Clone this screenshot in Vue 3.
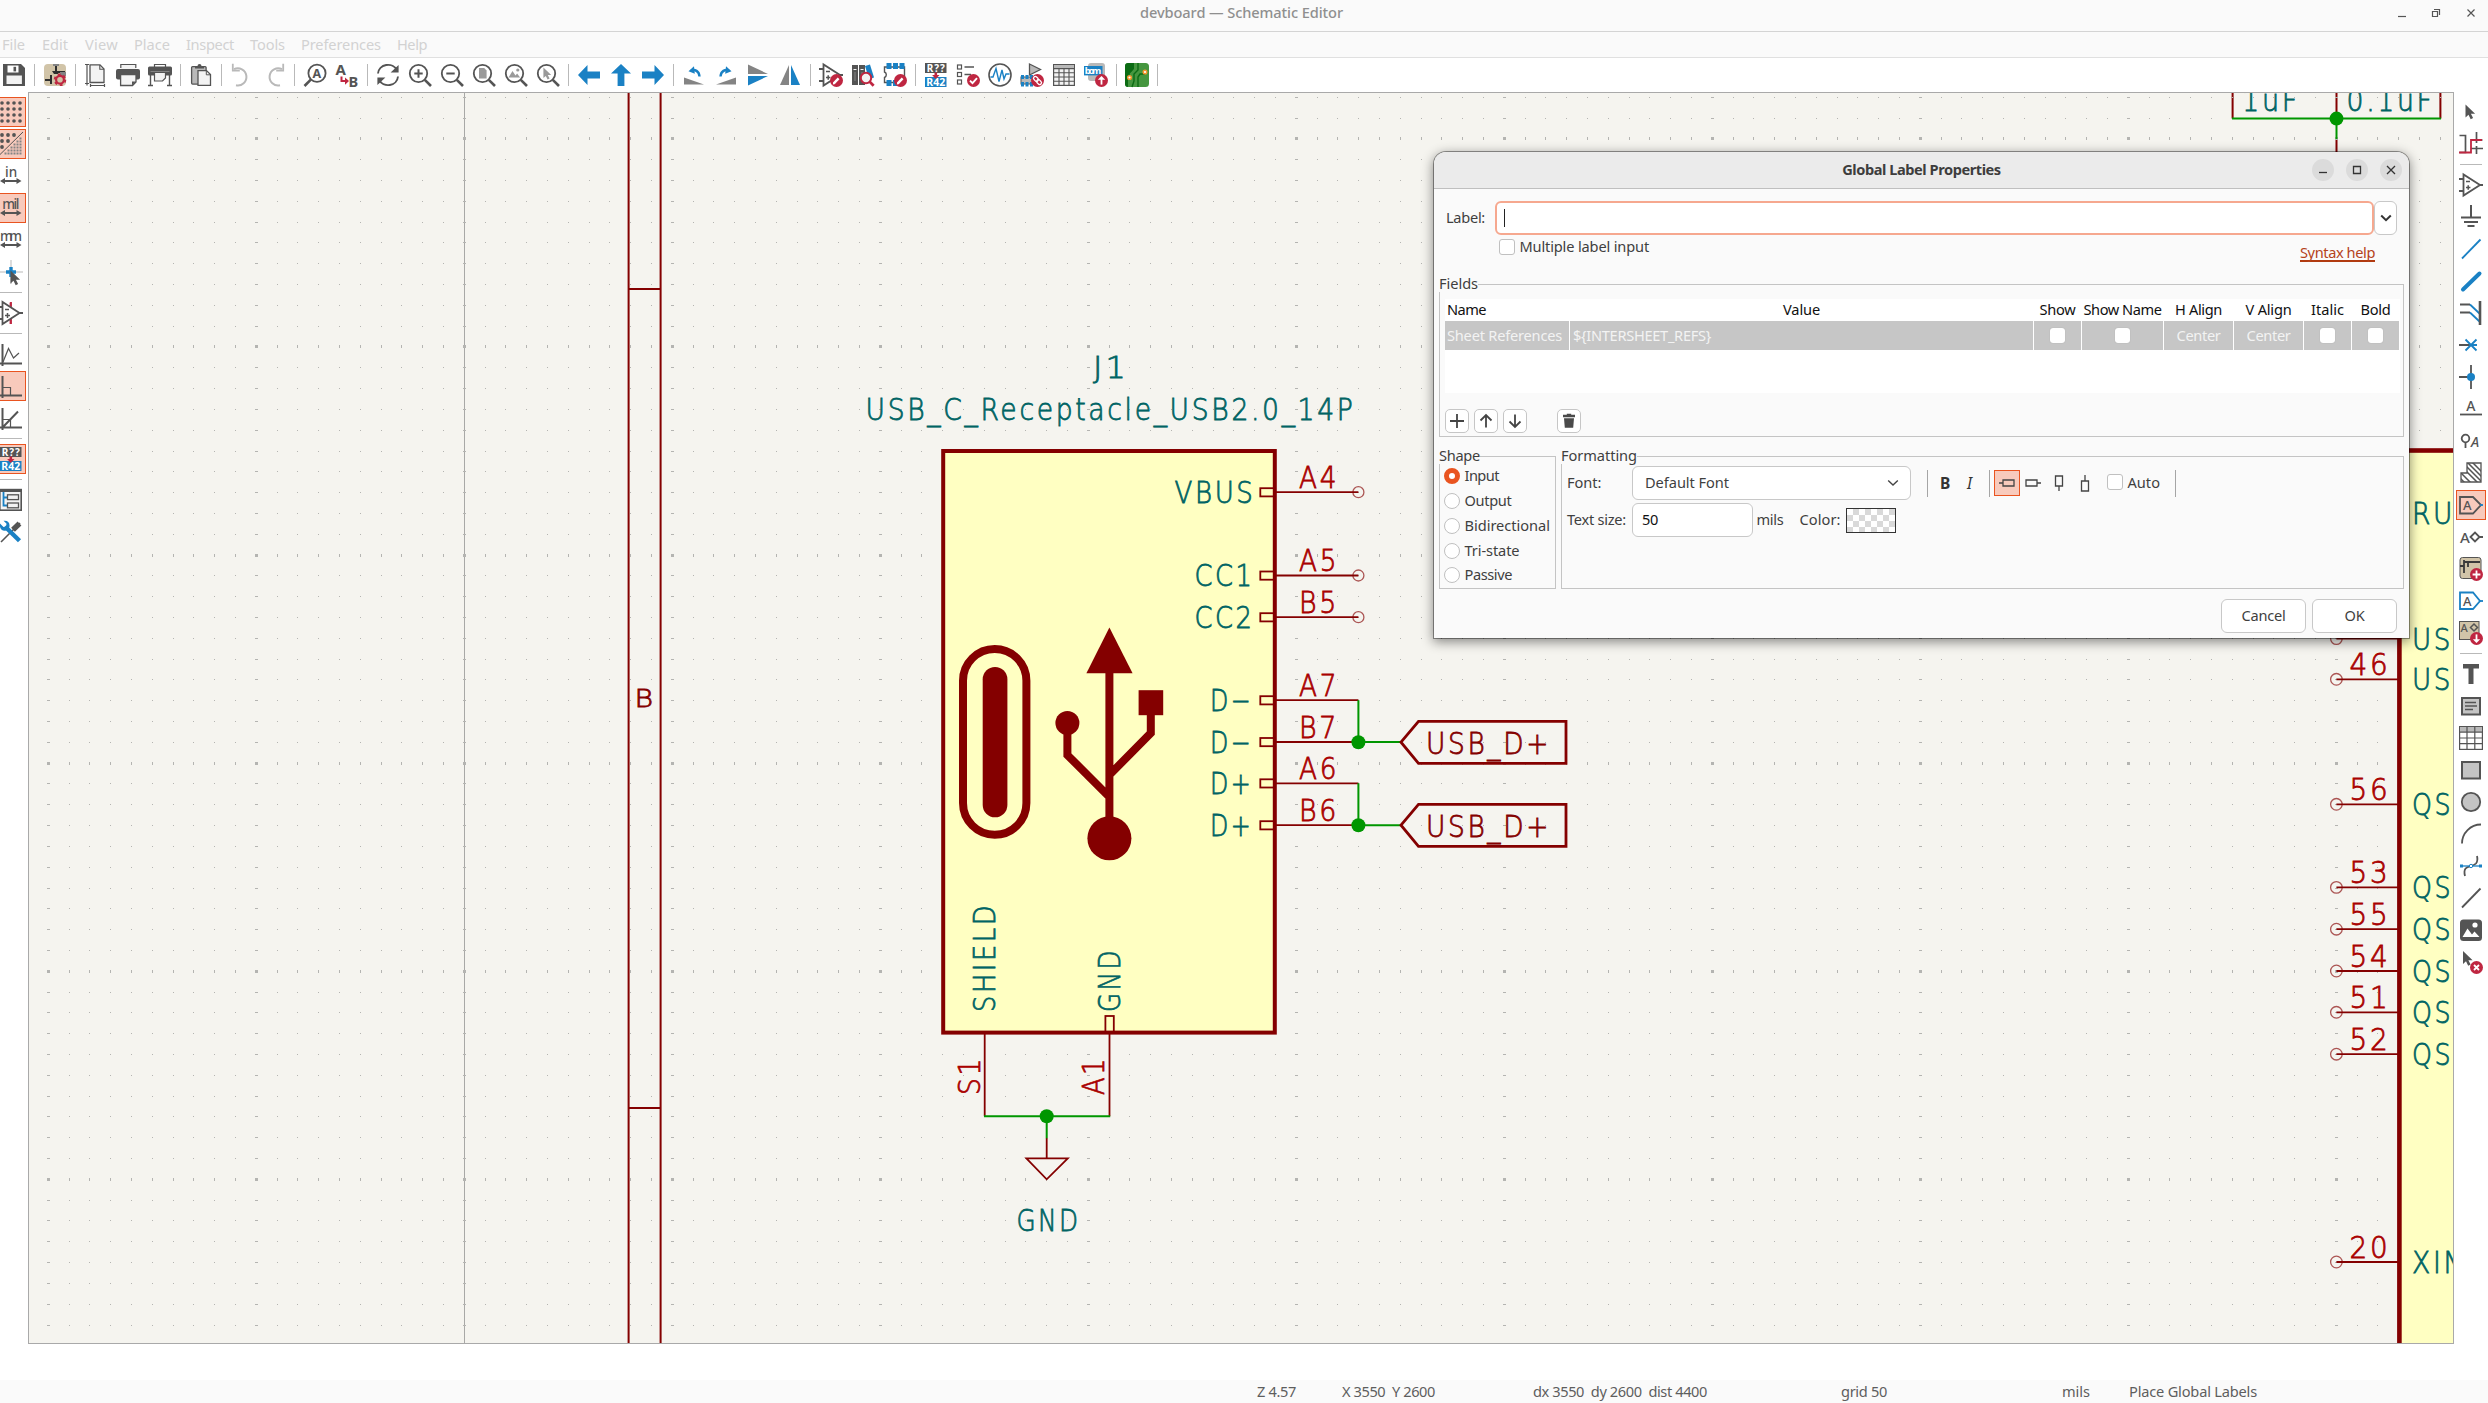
<script setup>
const G = '#545454', B = '#1a81c4', R = '#bf2641', M = '#b9b9b9', L = '#f3f3f3', D = '#848484'

// Spreads or tightens the letters of a label so it fills the given width.
const vFit = {
  mounted(el, { value }) {
    el.classList.add('ui')
    const natural = el.getBoundingClientRect().width
    el.style.letterSpacing = (value - natural) / el.textContent.length + 'px'
  }
}

const line = (d, c = G, w = 2) => `<path d="${d}" fill="none" stroke="${c}" stroke-width="${w}"/>`
const fill = (d, c = G) => `<path d="${d}" fill="${c}"/>`
const txt = (t, x, y, s, c = G, w = 700, extra = '') =>
  `<text x="${x}" y="${y}" font-size="${s}" font-weight="${w}" fill="${c}" ${extra}>${t}</text>`
const lens = inner => `<circle cx="10.5" cy="10.5" r="8.7" fill="none" stroke="${G}" stroke-width="1.8"/>` + line('M16.8 16.8L23 23', G, 2.6) + inner
const badge = inner => `<circle cx="17.5" cy="17.5" r="6.5" fill="${R}"/>` + inner
const pencil = badge(line('M14.8 20.4L19.6 15.4', '#fff', 2.4) + fill('M13.8 21.5l.6-2.4 1.8 1.8z', '#fff'))
const amp = line('M4.5 1.5V22.5L21 12Z', G, 1.8) + line('M0 6H4M0 18H4M21 12H24', G, 1.8) + line('M7 8.5h4M7 14.5h4.4M9.2 12.3v4.4', G, 1.5)
const annot = `<rect x="1" y="0" width="21.5" height="10" fill="${G}"/><rect x="1" y="14" width="21.5" height="10" fill="${B}"/>` +
  txt('R??', 2.8, 8.8, 10, '#fff', 700, 'textLength="18"') + txt('R42', 2.2, 22.8, 10.5, '#fff', 700, 'textLength="19"') + fill('M10.5 9.5h2.6v2.5h2.4L11.8 16 8.1 12h2.4z', R)
const unit = t => txt(t, t === 'in' ? 6 : t === 'mil' ? 3.3 : 1, 12.5, 13.5, G, 500, t === 'mm' ? 'textLength="22"' : t === 'mil' ? 'textLength="17"' : '') +
  line('M4 17H19.5') + fill('M1 17l5-3v6zM22.5 17l-5-3v6z')
const cursor = (x, y, c = G) => fill(`M${x} ${y}v13l3-2.8 2.2 4.6 2.4-1.2-2.2-4.4h4.2z`, c)

const icons = {
  save: fill('M1 1H19L23 5V23H1Z') + fill('M5.5 2.5h11v7h-11z', '#fff') + fill('M11.5 3.8h2.6v4.6h-2.6z') + fill('M4.5 12.5h15.4V21H4.5z', L),
  setup: `<rect x="1" y="1" width="22" height="22" rx="4" fill="#d1c4a8"/>` + line('M13 1v6M13 7v4M2 17h5M8 12v9M13 9h9', '#2e2e2e', 2) + fill('M9 8h8l-2 3h-4z', '#2e2e2e') + fill('M10 1h6v2h-6zM17 9h6v4h-6z', D) +
    `<circle cx="17" cy="16.8" r="3.9" fill="none" stroke="${R}" stroke-width="2.2"/><circle cx="17" cy="16.8" r="5.4" fill="none" stroke="${R}" stroke-width="1.8" stroke-dasharray="2.8 2.85"/>`,
  page: line('M3 1.5V22.5M1 1.5h4M1 20.5h4M6.5 22.5h14M6.5 21v3M20.5 21v3', G, 1.2) + `<path d="M6 1.8H16L20 6V19.5H6Z" fill="${L}" stroke="${G}" stroke-width="1.3"/>` + line('M15.8 2v4.2H20', G, 1.1),
  print: fill('M5 1h15v5H5z', L) + line('M4.8 5V1.5h15V5', G, 1.2) + `<rect x="0" y="6" width="24" height="10.5" rx="2" fill="${G}"/><path d="M4.6 11.5H20V19l-3.5 3.5H4.6z" fill="${L}" stroke="${G}" stroke-width="1.3"/>` + fill('M16 18.5h4l-4 4z'),
  plot: line('M6.5 4V1.5h11V4', G, 1.2) + `<rect x="0" y="3.5" width="24" height="9" rx="1.5" fill="${G}"/>` + line('M2.5 8.5h19', D, 1) + `<path d="M6.5 9.5H17.5V15l-3 3h-8z" fill="${L}" stroke="${G}" stroke-width="1.2"/>` + line('M2.5 12v10M21.5 12v10M0 22.5h5M19 22.5h5', G, 1.4),
  paste: `<rect x="2.6" y="3.6" width="14.5" height="17.5" rx="1" fill="${M}" stroke="${G}" stroke-width="1.3"/>` + fill('M6 5.5V3h2.5a2 2 0 0 1 4 0H15v2.5z') + `<path d="M9 7.6H17.5L21.5 11.6V22.4H9z" fill="${L}" stroke="${G}" stroke-width="1.3"/>` + line('M17.3 7.8v4H21.4', G, 1),
  undo: line('M6 22.3A8.6 8.6 0 1 0 4 6.2', M) + line('M2.8.8V7.6H9.8', M, 1.8),
  redo: line('M18 22.3A8.6 8.6 0 1 1 20 6.2', M) + line('M21.2.8V7.6H14.2', M, 1.8),
  find: `<circle cx="14" cy="10.3" r="8.6" fill="none" stroke="${G}" stroke-width="1.8"/>` + line('M7.8 16.6L1.5 23', G, 2.6) + txt('A', 9.6, 14.8, 12.5),
  replace: txt('A', .6, 12, 15) + txt('B', 13.6, 23.5, 14.5) + line('M6.5 13.5v4.6h5', R, 2) + fill('M10 14.4l4 3.7-4 3.7z', R),
  refresh: line('M2 10.5A10 9.4 0 0 1 21 7.2M22 13.5A10 9.4 0 0 1 3 16.8', G, 1.9) + fill('M22.6 2v7.5h-8zM1.4 22v-7.5h8z'),
  zin: lens(line('M6.3 10.5h8.4M10.5 6.3v8.4')), zout: lens(line('M6.3 10.5h8.4')),
  zfit: lens(fill('M7 5h5.2L14.6 7.4V15.5H7z', '#9a9a9a')), zobj: lens(fill('M4.5 14.5L8.5 8l3 4.5 1.6-2 3 4z', '#9a9a9a') + `<circle cx="13.8" cy="7" r="1.6" fill="#9a9a9a"/>`),
  zsel: lens(fill('M7.4 4.5v10.6l2.4-2.2 1.8 3.6 2-1-1.8-3.5h3.4z', '#9a9a9a')),
  back: fill('M1 12L10.5 2V8.6H23V15.4H10.5V22Z', B), up: fill('M12 1L22 10.5H15.4V23H8.6V10.5H2Z', B), fwd: fill('M23 12L13.5 2V8.6H1V15.4H13.5V22Z', B),
  rotl: fill('M2 14.5V21.5H22Z', D) + line('M17.5 13.5C17 8 13 6 9 7.5', B, 2.4) + fill('M6.5 8.3L12 3.2 12.8 10.8z', B),
  rotr: fill('M22 14.5V21.5H2Z', D) + line('M6.5 13.5C7 8 11 6 15 7.5', B, 2.4) + fill('M17.5 8.3L12 3.2 11.2 10.8z', B),
  mirv: fill('M2 1.5V11H22Z', D) + fill('M2 22.5V13H22Z', B), mirh: fill('M11 2V22H2Z', D) + fill('M13 2V22H22Z', B),
  symed: amp + pencil,
  lib: fill('M1 2h6v20H1zM8 2h6v20H8z') + line('M2.5 6.5h3M9.5 6.5h3', L, 1.2) + line('M4 9v9M11 9v9', D, 1) + fill('M14 3l5-1.5 4 13-5 1.5z', B) +
    `<circle cx="15" cy="15" r="5.2" fill="${L}" stroke="${R}" stroke-width="2"/>` + line('M18.6 18.6L22.6 22.8', R, 2.8),
  fped: `<path d="M1.5 4h20v15.5h-20v-5a3 3 0 0 0 0-5.5z" fill="#fff" stroke="${G}" stroke-width="1.4"/>` + fill('M3.5 0h5v6h-5zM10 0h5v6h-5zM16.5 0h5v6h-5zM3.5 17h5v6h-5zM10 17h5v6h-5z', B) + pencil,
  annot,
  erc: [2, 9.5, 17].map(y => `<rect x="1.5" y="${y}" width="4" height="4" fill="none" stroke="${G}" stroke-width="1.2"/>`).join('') + line('M8.5 4H18M8.5 11.5H15', G, 1.4) + badge(line('M14 17.6l2.5 2.6 4.5-5', '#fff', 1.9)),
  sim: `<circle cx="12" cy="12" r="11" fill="#fff" stroke="${G}" stroke-width="1.6"/>` + line('M2.5 14H5L8 5.5 11 18.5 14 7 16 16 18 11H21.5', B, 1.4),
  assign: `<path d="M9.5 1L20.5 6.5 9.5 12Z" fill="${M}" stroke="${G}" stroke-width="1.3"/><rect x="1" y="14" width="13" height="7" fill="${M}" stroke="${G}" stroke-width="1"/>` + fill('M1 12h3v4H1zM5.5 12h3v4h-3zM10 12h3v4h-3zM1 19h3v4.5H1zM5.5 19h3v4.5h-3zM10 19h3v4.5h-3z', B) + badge(`<g transform="rotate(45 17.5 17.5)" fill="none" stroke="#fff" stroke-width="1.3"><rect x="12.6" y="15.7" width="5.4" height="3.6" rx="1.8"/><rect x="17" y="15.7" width="5.4" height="3.6" rx="1.8"/></g>`),
  grid: `<rect x="1.6" y="1.6" width="20.8" height="20.8" fill="${L}" stroke="${G}" stroke-width="1.2"/>` + fill('M2 2h20v3H2z', M) + line('M2 5.6h20M2 9.8h20M2 14h20M2 18.2h20M7 5.6V22M12 5.6V22M17 5.6V22', G, 1.1),
  bom: `<rect x="4" y="0" width="17" height="18" rx="3" fill="${M}"/><rect x="0" y="3" width="18.5" height="9.4" fill="${B}"/>` + txt('bom', .8, 11, 9.5, '#fff', 700, 'textLength="16.5"') + badge(line('M17.5 21.6V15', '#fff', 1.8) + fill('M13.8 16.8l3.7-3.8 3.7 3.8z', '#fff')),
  pcb: `<rect x="0" y="0" width="24" height="24" rx="3.5" fill="#45963f"/>` + fill('M3 0H9V6L3 12V24A3 3 0 0 1 0 21V3A3 3 0 0 1 3 0Z', '#0b6b14') + line('M13 0V7L9 11V18L7 24M20 11H15L13 14V24M4 15V10L7 7', '#0b6b14', 1.4) + `<circle cx="20" cy="9" r="1.8" fill="#fff" stroke="#f5962f" stroke-width="1.5"/><circle cx="4.5" cy="14.5" r="1.8" fill="#fff" stroke="#f5962f" stroke-width="1.5"/>`,
  dots: [3, 9, 15, 21].map(y => [3, 9, 15, 21].map(x => `<circle cx="${x}" cy="${y}" r="1.8" fill="${G}"/>`).join('')).join(''),
  dots2: [[3, 3], [9, 3], [15, 3], [3, 9], [9, 9], [3, 15]].map(([x, y]) => `<circle cx="${x}" cy="${y}" r="1.9" fill="${G}"/>`).join('') + line('M0 23.5L24 0', G, 1) +
    [[21, 6.5], [18, 9.5], [21, 9.5], [15, 12.5], [18, 12.5], [21, 12.5], [12, 15.5], [15, 15.5], [18, 15.5], [21, 15.5], [9, 18.5], [12, 18.5], [15, 18.5], [18, 18.5], [21, 18.5], [6, 21.5], [9, 21.5], [12, 21.5], [15, 21.5], [18, 21.5], [21, 21.5]].map(([x, y]) => `<rect x="${x - .5}" y="${y - 1}" width="2" height="2" fill="${D}"/>`).join(''),
  inch: unit('in'), mil: unit('mil'), mm: unit('mm'),
  cross: line('M12 0V24M0 12H24', M, 1) + line('M12 7v10M7 12h10', B, 3.4) + cursor(11.5, 10.5),
  hidden: line('M12 1V23', R, 1.8) + `<path d="M4 1V23L21 12Z" fill="#fff"/>` + line('M11.5 1.5V5M11.5 19v4', R, 1.8) + line('M3.5 1V23L20.5 12Z', G, 1.8) + line('M0 6H3M0 18H3M20 12H24', G, 1.8) + line('M6 8.5h4M6 14.5h5M8.5 12v5', G, 1.5),
  free: line('M3.5 2V24M1 21.5H23') + line('M4 20L9.5 6.5 14.5 16 20 11', G, 1.2), ortho: line('M3.5 2V24M1 21.5H23') + line('M4 13.5H11.5V21', G, 1.2),
  deg45: line('M3.5 2V24M1 21.5H23M4 21L19 5.5') + line('M4 13.5H11.5V21', G, 1.2),
  tree: `<rect x=".8" y="1.6" width="21.4" height="20.6" fill="${L}" stroke="${G}" stroke-width="1.6"/>` + fill('M0 1h23v3H0z') + line('M4.5 4V17.5H8M4.5 9.5H8', B, 1.8) + `<g fill="${L}" stroke="${G}" stroke-width="1.3"><rect x="8.5" y="6.8" width="11" height="4.8"/><rect x="8.5" y="15" width="11" height="4.8"/></g>`,
  tools: line('M21 3L2 22', G, 1.6) + line('M20.5 3.5L14 9.8', G, 5.4) + line('M6 6.5L20.5 20.8', B, 4.4) + fill('M1 3.5L4.5 7 7.4 6.6 7.4 3.6 4.5.8C9 0 11.5 3.5 10.2 7.5L7 10.5C3 11.5 0 8.5 1 3.5z', B),
  select: cursor(6.5, 4.5),
  highlight: line('M.5 3.5H6.5V20.5H.5M17.5 0V11M12 16.5H24M17.5 14V22M14.5 8h9', G, 1.7) + line('M0 20.5H12V8H23', R, 1.8),
  amp,
  power: line('M12 0V12.5M2 12.5H22M5 17H19M8.5 21H15.5'), wire: line('M3 21.5L21.5 2.5', B, 1.8), bus: `<path d="M4 20.5L20.5 4.5" stroke="${B}" stroke-width="4" stroke-linecap="round"/>`,
  entry: line('M1 3.5H11M1 11.5H11') + line('M11 3.5L21 13M11 11.5L21 21', B, 1.8) + line('M21 0V24', G, 2.6),
  noconn: line('M0 12H12') + line('M6.5 6.5L17.5 17.5M17.5 6.5L6.5 17.5M12 12H18', B, 1.8), junc: line('M12 0V24M0 12H12', G, 1.8) + `<circle cx="12" cy="12" r="4" fill="${B}"/>`,
  netlabel: txt('A', 7.2, 14, 14, G, 500) + line('M1 17.5H23', G, 1.8),
  rule: `<circle cx="6.5" cy="9.5" r="3.8" fill="none" stroke="${G}" stroke-width="1.8"/>` + line('M6.5 13V19', G, 1.8) + txt('A', 12, 17.5, 14, G, 500, 'font-style="italic"'),
  hatch: `<clipPath id="hc"><path d="M8 2H22V21H2V12H8Z"/></clipPath><g clip-path="url(#hc)">` + line('M-8 2L14 24M-3 0L21 24M1 -1L26 24M6 -1L31 24M11 -1L33 21M-12 4L10 26', G, 1.5) + `</g>` + line('M8 2H22V21H2V12H8Z', G, 1.3),
  glabel: `<path d="M1 4H14L22 12L14 20.5H1Z" fill="none" stroke="${G}" stroke-width="1.8"/>` + line('M21 12H24', B, 1.8) + txt('A', 4, 17, 13, G, 500),
  hlabel: txt('A', 1, 17.5, 15, G, 500) + line('M11.5 12L16 7.5 20.5 12 16 16.5ZM20.5 12H24', G, 1.8),
  sheet: `<rect x="1" y=".5" width="21" height="21" rx="2.5" fill="#d1c4a8" stroke="${G}" stroke-width="1"/>` + line('M1 9h4V5h16M5 3v13M9 5v5', '#3a3a3a', 1.8) + badge(line('M17.5 13.6v7.8M13.6 17.5h7.8', '#fff', 1.8)),
  slabel: `<path d="M1 3.5H14L21 12L14 20H1Z" fill="#fff" stroke="${B}" stroke-width="1.8"/>` + line('M20.5 12H24', B, 1.8) + txt('A', 4, 17, 13, G, 500),
  ilabel: `<rect x=".5" y=".5" width="19.5" height="18" fill="#d1c4a8" stroke="${G}" stroke-width="1"/>` + txt('A', 1.5, 11, 11, G, 500) + line('M11.5 6.5L15 3 18.5 6.5 15 10Z', G, 1.5) + badge(line('M17.5 13.4V20', '#fff', 1.8) + fill('M13.8 18.2l3.7 3.8 3.7-3.8z', '#fff')),
  text: fill('M4 2H20V6.5H14.5V22H9.5V6.5H4Z'), tbox: `<rect x="3" y="4" width="18" height="16.5" fill="#c4c4c4" stroke="${G}" stroke-width="2"/>` + line('M6 8.5h11M6 12h12M6 15.5h8', G, 1.3),
  table: `<rect x=".6" y=".6" width="22.8" height="22.8" fill="#fff" stroke="${G}" stroke-width="1.2"/>` + fill('M1 1h22v5H1z', M) + line('M1 6.2h22M1 12h22M1 17.6h22M8 1V23M15.8 1V23', G, 1.2),
  rect: `<rect x="3" y="4" width="18" height="16.5" fill="#c4c4c4" stroke="${G}" stroke-width="2"/>`, circ: `<circle cx="12" cy="12" r="9.2" fill="#c4c4c4" stroke="${G}" stroke-width="1.8"/>`,
  arc: line('M3 21.5A19 19 0 0 1 22 2.5', G, 1.8), bez: line('M6 22C3 10 13 14 17 9.5C19 7 18.5 4 18 2', G, 1.8) + line('M2 12H22', B, 1.3) + fill('M1 10.5h3v3H1zM20 10.5h3v3h-3z', B) + `<circle cx="12" cy="12" r="1.7" fill="#fff" stroke="${B}" stroke-width="1"/>`,
  ln: line('M3 21.5L21.5 2.5', G, 1.8), img: `<rect x="1" y="1.5" width="22" height="21.5" rx="3.5" fill="${G}"/>` + fill('M3.5 19L8.5 10.5 13 16.5 15.5 13.5 20.5 19z', '#fff') + `<circle cx="16" cy="7" r="2.6" fill="#fff"/>`,
  del: cursor(4, 1) + badge(line('M15 15l5 5M20 15l-5 5', '#fff', 1.8))
}

const top = 'save | setup | page print plot | paste | undo redo | find replace | refresh zin zout zfit zobj zsel | back up fwd | rotl rotr mirv mirh | symed lib fped | annot erc sim assign grid bom | pcb |'.split(' ')
const left = 'dots* dots2* inch mil* mm cross | hidden | free ortho* deg45 | annot* | tree tools'.split(' ')
const right = 'select highlight | amp power wire bus entry noconn junc netlabel rule hatch glabel* hlabel sheet slabel ilabel | text tbox table rect circ arc bez ln img del'.split(' ')

const menus = [['File', 23, 17], ['Edit', 26, 17], ['View', 33, 16], ['Place', 36, 16], ['Inspect', 48, 16], ['Tools', 35, 16], ['Preferences', 80, 16], ['Help', 30, 0]]

// Grid dots: every tenth row and column is drawn heavier.
let gridPath = ''
for (let j = -2; j < 58; j++) {
  const y = Math.floor(138.85 + 20.81 * j), my = j % 10 === 0
  for (let i = -1; i < 116; i++) {
    const x = Math.floor(48.2 + 20.8 * i), mx = i % 10 === 0
    const w = mx ? 3 : 1, h = my ? 3 : 1
    gridPath += `M${x - (mx ? 1 : 0)} ${y - (my ? 1 : 0)}h${w}v${h}h-${w}z`
  }
}

const T = '#006464', N = '#a90000', K = '#840000'
const pins = [['A4', 492.2, 'VBUS', 1174.5, 81], ['A5', 575.5, 'CC1', 1194.5, 60], ['B5', 617.2, 'CC2', 1194.5, 60], ['A7', 700.2, 'D−', 1210, 43], ['B7', 742, 'D−', 1210, 43], ['A6', 783.3, 'D+', 1210, 43], ['B6', 825.2, 'D+', 1210, 43]]
const mcu = [['', 638.6, 'US', 41], ['46', 679.3, 'US', 41], ['56', 804.3, 'QS', 41], ['53', 887.4, 'QS', 41], ['55', 929.2, 'QS', 41], ['54', 971, 'QS', 41], ['51', 1012.3, 'QS', 41], ['52', 1054.2, 'QS', 41], ['20', 1262, 'XIN', 54]]
const labels = [
  ['J1', 1093, 378, 36, T], ['USB_C_Receptacle_USB2.0_14P', 865.5, 419.5, 490, T], ['GND', 1016.5, 1231, 64, T],
  ['SHIELD', 994.5, 1012, 109, T, 1], ['GND', 1120, 1012, 64, T, 1], ['S1', 979.5, 1095, 39, N, 1], ['A1', 1104, 1095, 39, N, 1],
  ['USB_D+', 1426, 754.3, 125, K], ['USB_D+', 1426, 837.3, 125, K],
  ['1uF', 2242, 110.7, 58, T], ['0.1uF', 2346.5, 110.7, 88, T], ['RU', 2412, 523.5, 43, T],
  ...pins.flatMap(p => [[p[2], p[3], p[1] + 10.7, p[4], T], [p[0], 1299, p[1] - 4.5, 40, N]]),
  ...mcu.flatMap(p => [[p[2], 2412, p[1] + 11, p[3], T], ...(p[0] ? [[p[0], 2349.5, p[1] - 4.5, 41, N]] : [])])
]
const columns = [['Name', 39], ['Value', 37], ['Show', 36], ['Show Name', 78], ['H Align', 47], ['V Align', 46], ['Italic', 33], ['Bold', 30]]
const shapes = [['Input', 34.5], ['Output', 47], ['Bidirectional', 85.5], ['Tri-state', 55], ['Passive', 47.5]]
const status = [['Z 4.57', 39, 46], ['X 3550  Y 2600', 93, 98], ['dx 3550  dy 2600  dist 4400', 174, 134], ['grid 50', 46, 175], ['mils', 28, 39], ['Place Global Labels', 128, 0]]
const plugs = ['M5 13H9M9 10H20V16H9Z', 'M21 13H17M6 10H17V16H6Z', 'M13 21V16M9.5 6H16.5V16H9.5Z', 'M13 5V11M9.5 11H16.5V21H9.5Z']
</script>

<template>
  <div class="app">
    <header class="titlebar">
      <span class="t-left"></span>
      <span v-fit="203" class="app-title">devboard — Schematic Editor</span>
      <span class="winbtns">
        <svg width="12" height="12" viewBox="0 0 12 12"><path d="M2 9.5h8" /></svg>
        <svg width="12" height="12" viewBox="0 0 12 12"><path d="M2.5 4.5h5v5h-5zM4 2.5h5.5V8" /></svg>
        <svg width="12" height="12" viewBox="0 0 12 12"><path d="M2.5 2.5l7 7M9.5 2.5l-7 7" /></svg>
      </span>
    </header>
    <nav class="menubar">
      <span v-for="m in menus" :key="m[0]" class="menu" :style="{ width: m[1] + m[2] + 'px' }"><span v-fit="m[1]">{{ m[0] }}</span></span>
    </nav>
    <div class="toolbar">
      <template v-for="(n, i) in top" :key="i">
        <i v-if="n === '|'" class="vsep"></i>
        <svg v-else class="ic" width="24" height="24" viewBox="0 0 24 24" v-html="icons[n]"></svg>
      </template>
    </div>
    <main class="middle">
      <aside class="side side-left">
        <template v-for="(n, i) in left" :key="i">
          <i v-if="n === '|'" class="hsep"></i>
          <span v-else class="cell" :class="{ on: n.endsWith('*') }"><svg width="24" height="24" viewBox="0 0 24 24" v-html="icons[n.replace('*', '')]"></svg></span>
        </template>
      </aside>
      <div class="canvas">
        <svg width="2424" height="1250" viewBox="29 93 2424 1250">
          <path d="M464.5 93V1343" stroke="#a8a8a6" />
          <g fill="none" :stroke="K" stroke-width="2">
            <path d="M628.6 93V1343M660.6 93V1343M628.6 289H660.6M628.6 1108H660.6" />
            <path d="M2232.6 93V118.6M2336.5 93V118.6M2440.4 93V118.6M2336.5 139V160" />
          </g>
          <text x="634.5" y="706.5" class="sch" font-size="25" :fill="K" :stroke="K" textLength="22" lengthAdjust="spacingAndGlyphs">B</text>
          <rect x="942.6" y="450.5" width="333" height="583" fill="#ffffc2" />
          <path :d="gridPath" fill="#b4b4b1" class="grid-dots" />
          <rect x="943.2" y="451" width="331.6" height="581.6" fill="#ffffc2" :stroke="K" stroke-width="4" />
          <rect x="2399.4" y="450.5" width="80" height="920" fill="#ffffc2" :stroke="K" stroke-width="4.6" />

          <g :fill="K" :stroke="K" stroke-width="8">
            <rect x="963" y="649" width="63.4" height="185.8" rx="31.7" fill="none" />
            <rect x="982.7" y="667" width="24.7" height="150.3" rx="12.3" stroke="none" />
            <path d="M1109.4 665V830M1067.4 722V755L1109.4 797M1150.8 705V733L1109.4 775" fill="none" />
            <path d="M1109.4 627.5L1132.6 673.3H1086.4Z" stroke="none" />
            <circle cx="1109.4" cy="838.3" r="22" stroke="none" />
            <circle cx="1067.4" cy="723" r="12" stroke="none" />
            <rect x="1138.6" y="690.2" width="24.6" height="25" stroke="none" />
          </g>

          <g fill="none" :stroke="K" stroke-width="1.8">
            <g v-for="p in pins" :key="p[0]">
              <path :d="`M1276 ${p[1]}H1358.4`" />
              <rect x="1260.3" :y="p[1] - 4" width="14" height="8.2" />
            </g>
            <circle v-for="y in [492.2, 575.5, 617.2]" :key="y" cx="1358.4" :cy="y" r="5.5" stroke-width="1.3" opacity=".65" />
            <g v-for="p in mcu" :key="p[1]">
              <path :d="`M2336.4 ${p[1]}H2399`" />
              <circle cx="2336.4" :cy="p[1]" r="5.8" stroke-width="1.3" opacity=".65" />
            </g>
            <path d="M984.7 1034V1116.3M1109.5 1034V1116.3M1046.7 1138V1158.3M1026.4 1158.3H1067.8L1046.7 1179.3Z" />
            <rect x="1105.4" y="1016" width="8.4" height="16" />
          </g>
          <g fill="none" stroke="#009600" stroke-width="2">
            <path d="M1358.4 700.2V742.1H1401M1358.4 783.3V825.2H1401M984 1116.3H1110.2M1046.7 1116.3V1138.3M2232 118.6H2441M2336.5 118.6V139" />
          </g>
          <g fill="#009600">
            <circle cx="1358.4" cy="742.2" r="7" /><circle cx="1358.4" cy="825.2" r="7" />
            <circle cx="1046.7" cy="1116.3" r="7" /><circle cx="2336.5" cy="118.6" r="7" />
          </g>
          <g fill="none" :stroke="K" stroke-width="2.8">
            <path d="M1401 742.2L1418.5 721.4H1566V763.4H1418.5Z" />
            <path d="M1401 825.2L1418.5 804.4H1566V846.4H1418.5Z" />
          </g>
          <text v-for="(l, i) in labels" :key="i" class="sch" font-size="30.2" :fill="l[4]" :stroke="l[4]" :textLength="l[3]" lengthAdjust="spacingAndGlyphs"
            :transform="`translate(${l[1]} ${l[2]})` + (l[5] ? ' rotate(-90)' : '')">{{ l[0] }}</text>
        </svg>
      </div>
      <aside class="side side-right">
        <template v-for="(n, i) in right" :key="i">
          <i v-if="n === '|'" class="hsep"></i>
          <span v-else class="cell" :class="{ on: n.endsWith('*') }"><svg width="24" height="24" viewBox="0 0 24 24" v-html="icons[n.replace('*', '')]"></svg></span>
        </template>
      </aside>
    </main>
    <div class="msgpanel"></div>
    <footer class="status">
      <span v-for="s in status" :key="s[0]" class="stat" :style="{ width: s[1] + s[2] + 'px' }"><span v-fit="s[1]">{{ s[0] }}</span></span>
    </footer>

    <section class="dialog">
      <div class="dlg-title">
        <span v-fit="158.5">Global Label Properties</span>
        <div class="dlg-btns">
          <b><svg width="12" height="12" viewBox="0 0 12 12"><path d="M2 8.5h8" /></svg></b>
          <b><svg width="12" height="12" viewBox="0 0 12 12"><path d="M2.5 2.5h7v7h-7z" /></svg></b>
          <b><svg width="12" height="12" viewBox="0 0 12 12"><path d="M2 2l8 8M10 2l-8 8" /></svg></b>
        </div>
      </div>
      <div class="row-label">
        <span class="lab"><span v-fit="39">Label:</span></span>
        <div class="field"><i class="caret"></i></div>
        <div class="drop"><svg width="12" height="8" viewBox="0 0 12 8"><path d="M1.2 1.5L6 6.2 10.8 1.5" fill="none" stroke="#333" stroke-width="2" /></svg></div>
      </div>
      <div class="row-multi">
        <i class="check"></i><span v-fit="129.5" class="multi">Multiple label input</span>
        <span v-fit="75" class="link">Syntax help</span>
      </div>

      <div class="group fields">
        <span class="legend"><span v-fit="39">Fields</span></span>
        <div class="table">
          <div class="tr th">
            <span v-for="c in columns" :key="c[0]"><span v-fit="c[1]">{{ c[0] }}</span></span>
          </div>
          <div class="tr td">
            <span><span v-fit="115">Sheet References</span></span>
            <span><span v-fit="138">${INTERSHEET_REFS}</span></span>
            <span><i></i></span><span><i></i></span>
            <span><span v-fit="44">Center</span></span><span><span v-fit="44">Center</span></span>
            <span><i></i></span><span><i></i></span>
          </div>
        </div>
        <div class="tools">
          <b><svg width="16" height="16" viewBox="0 0 16 16"><path d="M8 1V15M1 8H15" /></svg></b>
          <b><svg width="16" height="16" viewBox="0 0 16 16"><path d="M8 14.5V2M2.5 7.5L8 2 13.5 7.5" /></svg></b>
          <b><svg width="16" height="16" viewBox="0 0 16 16"><path d="M8 1.5V14M2.5 8.5L8 14 13.5 8.5" /></svg></b>
          <b class="trash"><svg width="16" height="16" viewBox="0 0 16 16"><path d="M2 1.8h3.8V.8h4.4v1H14v2.4H2zM3 5.2h10l-.8 9.6H3.8z" fill="#4a4a4a" stroke="none" /></svg></b>
        </div>
      </div>

      <div class="lower">
        <div class="group shape">
          <span class="legend"><span v-fit="41">Shape</span></span>
          <div v-for="(s, i) in shapes" :key="s[0]" class="radio"><i :class="{ sel: i === 0 }"></i><span v-fit="s[1]">{{ s[0] }}</span></div>
        </div>
        <div class="group format">
          <span class="legend"><span v-fit="76">Formatting</span></span>
          <div class="frow">
            <span class="flab"><span v-fit="34.5">Font:</span></span>
            <div class="select"><span v-fit="84">Default Font</span><svg width="12" height="8" viewBox="0 0 12 8"><path d="M1.2 1.5L6 6 10.8 1.5" fill="none" stroke="#444" stroke-width="1.4" /></svg></div>
            <i class="fsep s1"></i><strong class="bold">B</strong><em class="ital">I</em><i class="fsep s2"></i>
            <b v-for="(p, i) in plugs" :key="p" class="plug" :class="{ on: i === 0 }"><svg width="26" height="26" viewBox="0 0 26 26"><path :d="p" fill="none" stroke="#444" stroke-width="1.3" /></svg></b>
            <i class="check auto"></i><span v-fit="32.5">Auto</span><i class="fsep s3"></i>
          </div>
          <div class="frow second">
            <span class="flab"><span v-fit="59">Text size:</span></span>
            <div class="num"><span v-fit="16">50</span></div>
            <span class="mils"><span v-fit="27">mils</span></span><span class="color"><span v-fit="41">Color:</span></span>
            <i class="swatch"></i>
          </div>
        </div>
      </div>
      <div class="actions">
        <div class="btn"><span v-fit="44">Cancel</span></div>
        <div class="btn"><span v-fit="20">OK</span></div>
      </div>
    </section>
  </div>
</template>

<style>
body { margin: 0; overflow: hidden; }
</style>

<style scoped>
.app { position: relative; width: 2488px; height: 1403px; overflow: hidden; display: flex; flex-direction: column; background: #fff; font-family: "Noto Sans", "Open Sans", sans-serif; font-size: 14.6px; line-height: 18px; color: #3f3f3f; }
.app * { box-sizing: border-box; }
.app span { white-space: pre; }
.ui { display: inline-block; padding-bottom: 2px; vertical-align: top; }
.titlebar { height: 32px; flex: none; display: flex; align-items: center; justify-content: space-between; background: #fafafa; border-bottom: 1px solid #d4d4d4; padding-bottom: 6px; }
.t-left { width: 105px; }
.winbtns { width: 110px; }
.app-title { color: #8f8f8f; font-weight: 500; }
.winbtns { display: flex; gap: 22.3px; padding-left: 18px; }
.winbtns svg { fill: none; stroke: #555; stroke-width: 1.2; }
.menubar { height: 26px; flex: none; display: flex; align-items: center; background: #fafafa; border-bottom: 1px solid #e0e0e0; padding-left: 2px; color: #d2d2d2; }
.menu { flex: none; }
.toolbar { height: 34px; flex: none; display: flex; align-items: center; margin-left: -2px; }
.ic { flex: none; margin: 0 4px; overflow: visible; }
.vsep { flex: none; width: 1px; height: 22px; margin: 0 4px; background: #b9b9b9; }
.middle { height: 1252px; flex: none; display: flex; }
.side { flex: none; padding-top: 4px; overflow: hidden; display: flex; flex-direction: column; }
.side-left { width: 28px; padding-left: 0; }
.side-left > * { margin-left: -4px; }
.side-right { width: 34px; }
.side-right > * { margin-left: 2px; }
.cell { flex: none; width: 30px; height: 30px; margin-top: 1px; margin-bottom: 1px; display: grid; place-items: center; border: 1px solid transparent; }
.cell svg { overflow: visible; }
.cell.on { background: #f8cabc; border-color: #e95420; }
.hsep { flex: none; height: 1px; width: 22px; margin-top: 4px; margin-bottom: 4px; background: #b9b9b9; }
.side-left .hsep { margin-left: 0; }
.side-right .hsep { margin-left: 6px; }
.canvas { flex: none; width: 2426px; height: 1252px; border: 1px solid #a9a9a9; background: #f5f4ef; overflow: hidden; }
.canvas svg { display: block; }
.grid-dots { shape-rendering: crispEdges; }
.sch { font-family: "DejaVu Sans", sans-serif; font-weight: 200; stroke-width: .8; letter-spacing: 3px; white-space: pre; }
.msgpanel { height: 36px; flex: none; background: #fff; }
.status { flex: 1; display: flex; align-items: center; background: #fafafa; padding-left: 1257px; color: #5e5e5e; }
.stat { flex: none; }

.dialog { position: absolute; left: 1434px; top: 152px; width: 975px; height: 486px; background: #fafafa; border-radius: 12px 12px 0 0; box-shadow: 0 0 0 1px rgba(0, 0, 0, .38), 0 3px 12px 1px rgba(0, 0, 0, .45); }
.dlg-title { height: 37px; display: flex; align-items: center; justify-content: center; position: relative; background: #ebebeb; border-bottom: 1px solid #bfbfbf; border-radius: 12px 12px 0 0; font-weight: 700; color: #3d3d3d; }
.dlg-btns { position: absolute; right: 7px; top: 7px; display: flex; gap: 12px; }
.dlg-btns b { width: 22px; height: 22px; border-radius: 50%; background: #dbdbdb; display: grid; place-items: center; }
.dlg-btns svg { fill: none; stroke: #333; stroke-width: 1.3; }
.row-label { display: flex; align-items: center; padding: 12px 0 0 12px; }
.lab { width: 49px; }
.field { width: 879px; height: 34px; border: 2px solid #f6a88f; border-radius: 6px; background: #fff; display: flex; align-items: center; padding-left: 7px; }
.caret { width: 1px; height: 18px; background: #222; }
.drop { width: 23px; height: 34px; border: 1px solid #c8c8c8; border-radius: 6px; background: #fff; display: grid; place-items: center; }
.row-multi { height: 49px; display: flex; align-items: flex-start; padding: 4px 34px 0 65px; }
.check { flex: none; width: 16px; height: 16px; border: 1px solid #c0c0c0; border-radius: 3px; background: #fff; }
.multi { margin: -2px 0 0 4.5px; }
.link { margin: 4px 0 0 auto; padding: 0; color: #b5431c; line-height: 18px; border-bottom: 2px solid #b13a10; height: 19px; }
.group { border: 1px solid #c4c4c4; }
.legend { display: block; width: max-content; height: 18px; margin: -11px 0 0 -1px; background: #fafafa; }
.legend .ui { padding-bottom: 0; }
.fields { margin-left: 5px; width: 965px; height: 153px; }
.table { width: 955px; height: 94px; margin: 7px 0 0 5px; background: #fff; }
.tr { display: grid; grid-template-columns: 124px 463px 47px 81px 69px 69px 47px 47px; gap: 1px; }
.tr > span { display: flex; align-items: center; justify-content: center; }
.tr > span:first-child { justify-content: flex-start; padding-left: 2px; }
.th > span { height: 22px; color: #111; }
.td > span { height: 29px; background: #c6c6c6; color: #f3f3f3; }
.td > span:nth-child(2) { justify-content: flex-start; padding-left: 3px; }
.td i { width: 15px; height: 15px; border-radius: 3px; background: #fff; box-shadow: 0 0 1px #999; }
.tools { display: flex; gap: 5px; margin: 16px 0 0 5px; }
.tools b { width: 24px; height: 24px; border: 1px solid #c6c6c6; border-radius: 5px; background: #fff; display: grid; place-items: center; }
.tools svg { fill: none; stroke: #444; stroke-width: 1.8; }
.trash { margin-left: 25px; }
.lower { display: flex; gap: 5px; margin: 19px 0 0 5px; }
.shape { width: 117px; height: 133px; }
.format { width: 843px; height: 133px; }
.radio { display: flex; align-items: center; height: 24.75px; padding-left: 4px; gap: 4.5px; }
.radio i { width: 16px; height: 16px; border-radius: 50%; border: 1px solid #c0c0c0; background: #fff; }
.radio i.sel { border: 5px solid #e95420; }
.frow { display: flex; align-items: center; height: 34px; padding-left: 5px; margin-top: 2px; }
.second { margin-top: 3px; }
.flab { width: 65px; }
.select { width: 279px; height: 34px; border: 1px solid #c8c8c8; border-radius: 6px; background: #fff; display: flex; align-items: center; justify-content: space-between; padding: 0 11px 0 12px; }
.fsep { width: 1px; height: 27px; background: #a5a5a5; }
.s1 { margin-left: 16px; }
.bold { width: 12px; margin-left: 12px; font-size: 15.5px; color: #333; }
.ital { width: 8px; margin-left: 15px; font-size: 15.5px; color: #333; }
.s2 { margin-left: 14px; }
.plug { width: 26px; height: 26px; display: grid; place-items: center; }
.plug.on { margin-left: 4px; background: #f8cabc; box-shadow: inset 0 0 0 1px #e95420; }
.auto { margin: -2px 4.5px 0 9px; }
.s3 { margin-left: 15px; }
.num { width: 121px; height: 34px; border: 1px solid #c8c8c8; border-radius: 6px; background: #fff; padding: 6px 0 0 9px; color: #111; }
.mils { width: 43px; margin-left: 3.5px; }
.color { width: 46.5px; }
.swatch { width: 50px; height: 25px; border: 1px solid #333; background: repeating-conic-gradient(#d9d9d9 0 25%, #fff 0 50%) 0 0 / 12px 12px; }
.actions { display: flex; justify-content: flex-end; gap: 6px; padding: 10px 12px 0 0; }
.btn { width: 85px; height: 34px; border: 1px solid #c8c8c8; border-radius: 6px; background: #fff; display: grid; place-items: center; }
</style>
